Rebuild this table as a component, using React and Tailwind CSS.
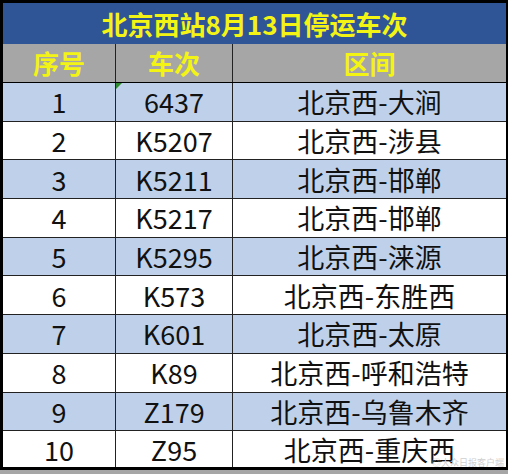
import React from 'react';

const rows = [
  ['1', '6437', '北京西-大涧'],
  ['2', 'K5207', '北京西-涉县'],
  ['3', 'K5211', '北京西-邯郸'],
  ['4', 'K5217', '北京西-邯郸'],
  ['5', 'K5295', '北京西-涞源'],
  ['6', 'K573', '北京西-东胜西'],
  ['7', 'K601', '北京西-太原'],
  ['8', 'K89', '北京西-呼和浩特'],
  ['9', 'Z179', '北京西-乌鲁木齐'],
  ['10', 'Z95', '北京西-重庆西'],
];

const font = { fontFamily: '"Microsoft YaHei", "Noto Sans CJK SC", "Noto Sans", sans-serif' };

export default function App() {
  return (
    <div className="w-[509px] h-[476px] bg-white overflow-hidden" style={font}>
      <div className="w-[508px] border-t-[3px] border-l-[3px] border-r-2 border-black">
        <div className="h-[41px] bg-[#2f5597] flex items-center justify-center text-[26px] font-bold text-[#f4f414] leading-none">
          北京西站8月13日停运车次
        </div>
        <div className="h-[39px] bg-[#a6a6a6] flex border-b border-black text-[26px] font-bold text-[#f4f414] leading-none">
          <div className="w-[113px] flex items-center justify-center border-r border-[#222]">序号</div>
          <div className="w-[117px] flex items-center justify-center border-r border-[#222]">车次</div>
          <div className="flex-1 flex items-center justify-center">区间</div>
        </div>
        {rows.map((r, i) => (
          <div
            key={r[0]}
            className={
              'h-[38.7px] flex text-[27px] text-[#111] leading-none ' +
              (i % 2 === 0 ? 'bg-[#bfd1ea] ' : 'bg-white ') +
              (i === rows.length - 1 ? 'border-b-[3px] border-black' : 'border-b border-[#222]')
            }
          >
            <div className="w-[113px] flex items-center justify-center border-r border-[#222]">{r[0]}</div>
            <div className="relative w-[117px] flex items-center justify-center border-r border-[#222]">
              {i === 0 && (
                <span className="absolute left-0 top-0 w-0 h-0 border-t-[6px] border-r-[6px] border-t-[#2e8b2e] border-r-transparent" />
              )}
              {r[1]}
            </div>
            <div className="relative flex-1 flex items-center justify-center">
              {r[2]}
              {i === rows.length - 1 && (
                <span className="absolute right-[2px] bottom-0 text-[9px] leading-none text-[#cfcfcf]">◎大众日报客户端</span>
              )}
            </div>
          </div>
        ))}
      </div>
      <div className="h-[4px] w-[508px] bg-[#a6a6a6]" />
    </div>
  );
}
